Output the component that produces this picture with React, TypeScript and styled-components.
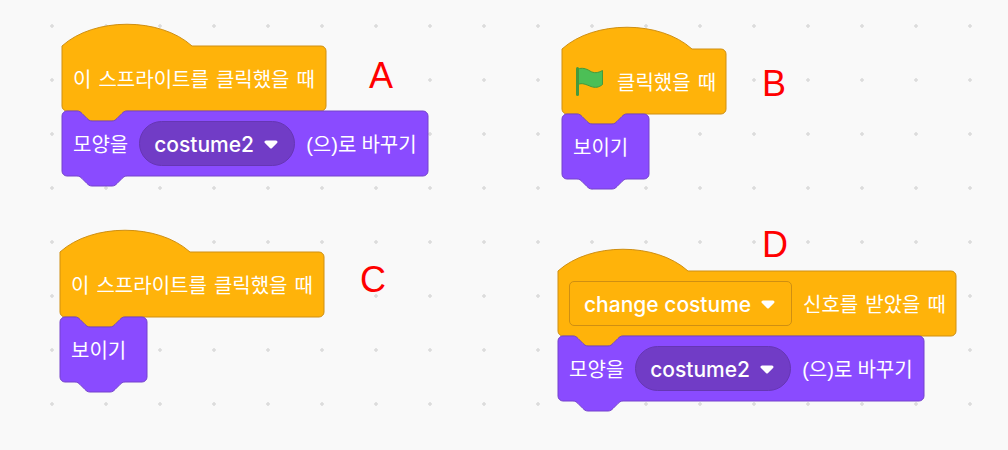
import React, {FC, ReactNode} from "react";
import styled, {createGlobalStyle} from 'styled-components';

const GlobalStyle = createGlobalStyle`
  html, body {
    margin: 0;
    padding: 0;
    background: #f9f9f9;
  }
`;

const Workspace = styled.div`
  position: relative;
  width: 1008px;
  height: 450px;
  overflow: hidden;
  background-color: #f9f9f9;
  background-image: radial-gradient(circle at 2px 2px, #dcdcdc 1.5px, transparent 1.9px);
  background-size: 54px 54px;
  background-position: 50px 24px;
  font-family: "Liberation Sans", "Noto Sans CJK KR", sans-serif;
`;

const Stack = styled.div<{$x: number; $y: number}>`
  position: absolute;
  left: ${({$x}) => $x}px;
  top: ${({$y}) => $y}px;
  display: flex;
  flex-direction: column;
  align-items: flex-start;
`;

const BlockBody = styled.div<{$width: number}>`
  position: relative;
  isolation: isolate;
  box-sizing: border-box;
  width: ${({$width}) => $width}px;
  height: 65px;
  padding: 0 11px;
  display: flex;
  align-items: center;
  gap: 11px;
  color: #fff;
  font-size: 20px;
  white-space: nowrap;
`;

const Shape = styled.svg`
  position: absolute;
  left: 0;
  top: 0;
  z-index: -1;
  overflow: visible;
`;

const Label = styled.span<{$tight?: boolean}>`
  flex: none;
  padding-top: 2px;
  line-height: 30px;
  word-spacing: ${({$tight}) => $tight ? '-0.5px' : '1.5px'};
`;

const Menu = styled.div<{$width: number}>`
  flex: none;
  box-sizing: border-box;
  width: ${({$width}) => $width}px;
  height: 45px;
  padding: 1px 0 0 14px;
  display: flex;
  align-items: center;
  gap: 10px;
  font-family: Inter, "Liberation Sans", sans-serif;
  font-size: 21px;
  font-weight: 500;
  background: #713cc6;
  border: 1px solid #6636b4;
  border-radius: 23px;
`;

const Field = styled(Menu)`
  background: #ffb30a;
  border-color: #cf8f12;
  border-radius: 5px;
`;

const FlagIcon = styled.svg`
  flex: none;
  margin: 0 3px 0 2px;
`;

const Letter = styled.div<{$x: number; $y: number}>`
  position: absolute;
  left: ${({$x}) => $x}px;
  top: ${({$y}) => $y}px;
  color: #ff0000;
  font-size: 36px;
  line-height: 40px;
`;

const NOTCH = 'c2.5 0 3.75 1.25 5 2.5 l5 5 c1.25 1.25 2.5 2.5 5 2.5 h20 c2.5 0 3.75 -1.25 5 -2.5 l5 -5 c1.25 -1.25 2.5 -2.5 5 -2.5';
const TAB = 'c-2.5 0 -3.75 1.25 -5 2.5 l-5 5 c-1.25 1.25 -2.5 2.5 -5 2.5 h-20 c-2.5 0 -3.75 -1.25 -5 -2.5 l-5 -5 c-1.25 -1.25 -2.5 -2.5 -5 -2.5';
const HEIGHT = 65;

const blockPath = (width: number, hat: boolean) => {
  const top = hat
    ? 'M0 0 c32 -29 98 -29 130 0'
    : `M0 5 a5 5 0 0 1 5 -5 H15 ${NOTCH}`;
  return `${top} H${width - 5} a5 5 0 0 1 5 5 V${HEIGHT - 5} a5 5 0 0 1 -5 5 H65 ${TAB} H5 a5 5 0 0 1 -5 -5 Z`;
};

interface BlockProps {
  width: number
  hat?: boolean
  children: ReactNode
}

const Block: FC<BlockProps> = ({width, hat = false, children}) => (
  <BlockBody $width={width}>
    <Shape width={width} height={HEIGHT}>
      <path
        d={blockPath(width, hat)}
        fill={hat ? '#ffb30a' : '#8a4bff'}
        stroke={hat ? '#cf8f12' : '#7443cc'}
        strokeWidth="1"
      />
    </Shape>
    {children}
  </BlockBody>
);

const Caret: FC = () => (
  <svg width="14" height="9" viewBox="0 0 14 9">
    <path d="M2 2 H12 L7 7 Z" fill="#fff" stroke="#fff" strokeWidth="3" strokeLinejoin="round" />
  </svg>
);

const Flag: FC = () => (
  <FlagIcon width="28" height="29" viewBox="0 0 28 29">
    <path
      d="M3 2 C7 0.5 11 1.5 15 4 C19 6.5 23 6 27.5 3.5 V17.5 C24 20.5 20 21 16 19.5 C11 17.5 7 15.5 3 17.5 Z"
      fill="#4cbf56"
      stroke="#45993d"
      strokeWidth="1"
      strokeLinejoin="round"
    />
    <path d="M2.5 1.5 V27.5" stroke="#45993d" strokeWidth="3" strokeLinecap="round" />
  </FlagIcon>
);

const SwitchCostume: FC = () => (
  <Block width={366}>
    <Label>모양을</Label>
    <Menu $width={156}>costume2<Caret /></Menu>
    <Label $tight>(으)로 바꾸기</Label>
  </Block>
);

const Show: FC = () => (
  <Block width={87}>
    <Label>보이기</Label>
  </Block>
);

const App: FC = () => (
  <Workspace>
    <GlobalStyle />
    <Stack $x={62} $y={46}>
      <Block width={264} hat><Label>이 스프라이트를 클릭했을 때</Label></Block>
      <SwitchCostume />
    </Stack>
    <Letter $x={369} $y={56}>A</Letter>

    <Stack $x={562} $y={49}>
      <Block width={164} hat>
        <Flag />
        <Label>클릭했을 때</Label>
      </Block>
      <Show />
    </Stack>
    <Letter $x={762} $y={64}>B</Letter>

    <Stack $x={60} $y={252}>
      <Block width={264} hat><Label>이 스프라이트를 클릭했을 때</Label></Block>
      <Show />
    </Stack>
    <Letter $x={360} $y={260}>C</Letter>

    <Stack $x={558} $y={271}>
      <Block width={398} hat>
        <Field $width={223}>change costume<Caret /></Field>
        <Label>신호를 받았을 때</Label>
      </Block>
      <SwitchCostume />
    </Stack>
    <Letter $x={762} $y={225}>D</Letter>
  </Workspace>
);

export default App;
